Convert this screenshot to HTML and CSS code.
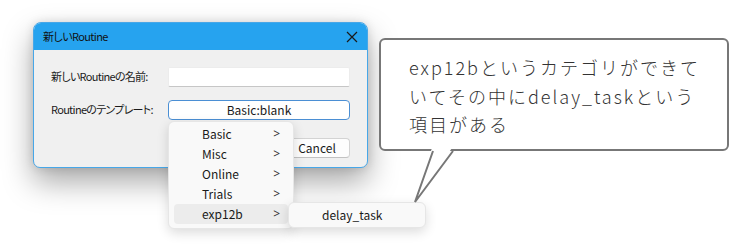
FILE: index.html
```html
<!DOCTYPE html>
<html lang="ja">
<head>
<meta charset="utf-8">
<link rel="stylesheet" href="styles.css">
</head>
<body>
<div class="canvas">
  <div class="dialog">
    <div class="titlebar">
      <span class="title">新しいRoutine</span>
      <svg class="close" width="12" height="12" viewBox="0 0 12 12"><path d="M1 1L11 11M11 1L1 11" stroke="#1a1a1a" stroke-width="1.2" fill="none"/></svg>
    </div>
    <div class="body">
      <div class="form">
        <span class="label">新しいRoutineの名前:</span>
        <div class="input"></div>
        <span class="label">Routineのテンプレート:</span>
        <div class="select">Basic:blank</div>
      </div>
      <div class="actions">
        <div class="btn">OK</div>
        <div class="btn">Cancel</div>
      </div>
    </div>
  </div>

  <div class="menu">
    <div class="item"><span>Basic</span><span class="arrow">&gt;</span></div>
    <div class="item"><span>Misc</span><span class="arrow">&gt;</span></div>
    <div class="item"><span>Online</span><span class="arrow">&gt;</span></div>
    <div class="item"><span>Trials</span><span class="arrow">&gt;</span></div>
    <div class="item active"><span>exp12b</span><span class="arrow">&gt;</span></div>
  </div>
  <div class="submenu">
    <div class="subitem">delay_task</div>
  </div>

  <div class="callout">
    <p class="callout-text">exp12bというカテゴリができて<br>いてその中にdelay_taskという<br>項目がある</p>
  </div>
  <svg class="tail" width="60" height="60" viewBox="0 0 60 60">
    <polygon points="17,0 -1,54 37,0" fill="#fff"/>
    <polyline points="18,3 0,54 38,3" fill="none" stroke="#777" stroke-width="2" stroke-linejoin="miter"/>
  </svg>
</div>
</body>
</html>
```

FILE: styles.css
```css
html, body {
  margin: 0;
  padding: 0;
  background: #fff;
}
body {
  font-family: "Noto Sans CJK JP", "Noto Sans", sans-serif;
  font-feature-settings: "palt";
  font-size: 12px;
  color: #1a1a1a;
}
.canvas {
  position: relative;
  width: 730px;
  height: 250px;
  overflow: hidden;
}
.dialog {
  position: absolute;
  left: 33px;
  top: 22px;
  width: 333px;
  height: 144px;
  border: 1px solid #47a7e8;
  border-radius: 8px 8px 7px 7px;
  background: #f0f0f0;
  box-shadow: 0 14px 30px rgba(0,0,0,0.34), 0 0 10px rgba(0,0,0,0.12);
  overflow: hidden;
}
.titlebar {
  height: 27px;
  background: #26a3ef;
  display: flex;
  align-items: center;
  justify-content: space-between;
  padding: 0 8px 0 9px;
}
.title {
  font-size: 11px;
  letter-spacing: -0.6px;
  color: #111;
  line-height: 1;
}
.close {
  display: block;
  margin-right: 1px;
}
.body {
  padding: 17px 17px 0 17px;
}
.form {
  display: grid;
  grid-template-columns: 117px 182px;
  grid-template-rows: 20px 20px;
  row-gap: 13px;
  align-items: center;
}
.label {
  font-size: 11px;
  letter-spacing: -0.7px;
  line-height: 1;
  white-space: nowrap;
  position: relative;
  top: -1px;
}
.input {
  height: 20px;
  box-sizing: border-box;
  background: #fff;
  border: 1px solid #ececec;
  border-bottom-color: #c6c6c6;
  border-radius: 2px;
}
.select {
  height: 20px;
  box-sizing: border-box;
  background: #fff;
  border: 1px solid #4b8fd4;
  border-radius: 4px;
  text-align: center;
  line-height: 17px;
  font-size: 12px;
}
.actions {
  display: flex;
  justify-content: flex-end;
  gap: 8px;
  margin-top: 18px;
}
.btn {
  width: 64px;
  height: 18px;
  background: #fdfdfd;
  border: 1px solid #d3d3d3;
  border-bottom-color: #c2c2c2;
  border-radius: 4px;
  text-align: center;
  line-height: 17px;
  font-size: 12px;
}
.menu {
  position: absolute;
  left: 168px;
  top: 121px;
  width: 114px;
  padding: 2px 5px 4px 5px;
  background: #f9f9f9;
  border: 1px solid #e6e6e6;
  border-radius: 6px;
  box-shadow: 0 4px 12px rgba(0,0,0,0.14);
}
.item {
  height: 20px;
  display: flex;
  align-items: center;
  justify-content: space-between;
  padding: 0 8px 0 28px;
  border-radius: 4px;
  line-height: 1;
}
.item.active {
  background: #ececec;
}
.arrow {
  font-family: "Noto Sans", sans-serif;
  font-size: 12px;
  color: #333;
}
.submenu {
  position: absolute;
  left: 288px;
  top: 202px;
  width: 136px;
  padding: 2px 0;
  background: #f9f9f9;
  border: 1px solid #e6e6e6;
  border-radius: 6px;
  box-shadow: 0 4px 12px rgba(0,0,0,0.14);
}
.subitem {
  height: 20px;
  display: flex;
  align-items: center;
  padding-left: 33px;
  line-height: 1;
}
.callout {
  position: absolute;
  left: 379px;
  top: 38px;
  width: 346px;
  height: 109px;
  border: 2px solid #777;
  border-radius: 6px;
  background: #fff;
}
.callout-text {
  margin: 0;
  padding: 13px 0 0 28px;
  font-family: "Noto Sans CJK JP", sans-serif;
  font-feature-settings: normal;
  font-weight: 300;
  font-size: 18px;
  letter-spacing: 2px;
  line-height: 28.5px;
  color: #333;
  white-space: nowrap;
}
.tail {
  position: absolute;
  left: 415px;
  top: 148px;
  overflow: visible;
}
```
